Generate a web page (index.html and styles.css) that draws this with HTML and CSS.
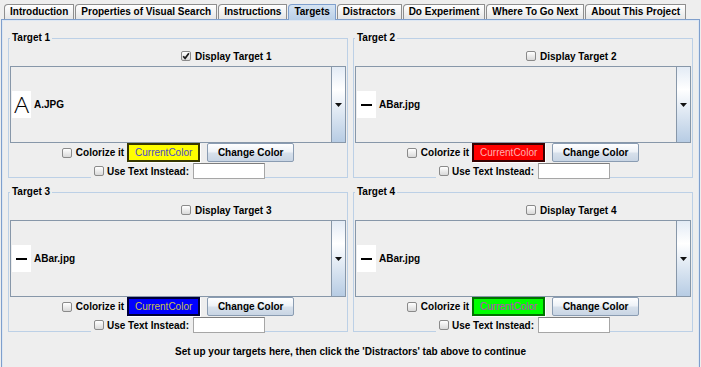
FILE: index.html
```html
<!DOCTYPE html>
<html>
<head>
<meta charset="utf-8">
<title>Targets</title>
<link rel="stylesheet" href="styles.css">
</head>
<body>
<div class="tabs">
  <div class="tab">Introduction</div>
  <div class="tab">Properties of Visual Search</div>
  <div class="tab">Instructions</div>
  <div class="tab active">Targets</div>
  <div class="tab">Distractors</div>
  <div class="tab">Do Experiment</div>
  <div class="tab">Where To Go Next</div>
  <div class="tab">About This Project</div>
</div>
<div class="panel">
  <div class="grid">
    <fieldset class="group">
      <legend>Target 1</legend>
      <div class="display"><span class="cb"><svg width="8" height="8" viewBox="0 0 8 8"><path d="M1.2 4.2 L3.1 6.3 L6.9 1.2" stroke="#1a1a1a" stroke-width="1.7" fill="none"/></svg></span><span>Display Target 1</span></div>
      <div class="combo">
        <div class="item"><span class="thumb"><span class="glyph-a">A</span></span><span class="name">A.JPG</span></div>
        <div class="arrow"><svg width="7" height="4" viewBox="0 0 7 4"><path d="M0 0H7L3.5 4Z" fill="#111"/></svg></div>
      </div>
      <div class="row1"><span class="cb"></span><span class="lbl">Colorize it</span><span class="swatch yellow">CurrentColor</span><span class="btn">Change Color</span></div>
      <div class="row2"><span class="cb"></span><span class="lbl">Use Text Instead:</span><span class="field"></span></div>
    </fieldset>
    <fieldset class="group">
      <legend>Target 2</legend>
      <div class="display"><span class="cb"></span><span>Display Target 2</span></div>
      <div class="combo">
        <div class="item"><span class="thumb"><span class="bar"></span></span><span class="name">ABar.jpg</span></div>
        <div class="arrow"><svg width="7" height="4" viewBox="0 0 7 4"><path d="M0 0H7L3.5 4Z" fill="#111"/></svg></div>
      </div>
      <div class="row1"><span class="cb"></span><span class="lbl">Colorize it</span><span class="swatch red">CurrentColor</span><span class="btn">Change Color</span></div>
      <div class="row2"><span class="cb"></span><span class="lbl">Use Text Instead:</span><span class="field"></span></div>
    </fieldset>
    <fieldset class="group">
      <legend>Target 3</legend>
      <div class="display"><span class="cb"></span><span>Display Target 3</span></div>
      <div class="combo">
        <div class="item"><span class="thumb"><span class="bar"></span></span><span class="name">ABar.jpg</span></div>
        <div class="arrow"><svg width="7" height="4" viewBox="0 0 7 4"><path d="M0 0H7L3.5 4Z" fill="#111"/></svg></div>
      </div>
      <div class="row1"><span class="cb"></span><span class="lbl">Colorize it</span><span class="swatch blue">CurrentColor</span><span class="btn">Change Color</span></div>
      <div class="row2"><span class="cb"></span><span class="lbl">Use Text Instead:</span><span class="field"></span></div>
    </fieldset>
    <fieldset class="group">
      <legend>Target 4</legend>
      <div class="display"><span class="cb"></span><span>Display Target 4</span></div>
      <div class="combo">
        <div class="item"><span class="thumb"><span class="bar"></span></span><span class="name">ABar.jpg</span></div>
        <div class="arrow"><svg width="7" height="4" viewBox="0 0 7 4"><path d="M0 0H7L3.5 4Z" fill="#111"/></svg></div>
      </div>
      <div class="row1"><span class="cb"></span><span class="lbl">Colorize it</span><span class="swatch green">CurrentColor</span><span class="btn">Change Color</span></div>
      <div class="row2"><span class="cb"></span><span class="lbl">Use Text Instead:</span><span class="field"></span></div>
    </fieldset>
  </div>
  <div class="hint">Set up your targets here, then click the 'Distractors' tab above to continue</div>
</div>
</body>
</html>
```
FILE: styles.css
```css
* { box-sizing: border-box; }
body {
  margin: 0;
  width: 701px;
  height: 367px;
  overflow: hidden;
  background: #eeeeee;
  font: bold 10px "Liberation Sans", Arial, sans-serif;
  color: #000;
}
.tabs {
  display: flex;
  padding: 4px 0 0 4px;
  height: 19px;
}
.tab {
  position: relative;
  height: 15px;
  line-height: 14px;
  padding: 0 5px;
  margin-right: 1px;
  border: 1px solid #8e8e8e;
  border-bottom: 0;
  border-radius: 4px 1px 0 0;
  background: linear-gradient(#ffffff, #e6e6e6);
  white-space: nowrap;
}
.tab.active {
  z-index: 1;
  height: 16px;
  border-color: #7f9fcc;
  background: linear-gradient(#d6e4f3, #b9cfe7);
}
.panel {
  margin: 0 1px;
  height: 360px;
  border: 1px solid #7f9fcc;
  box-shadow: inset 0 0 0 1px #dde7f3;
}
.grid {
  display: grid;
  grid-template-columns: 340px 340px;
  column-gap: 5px;
  row-gap: 8px;
  padding: 12px 0 0 6px;
}
.group {
  margin: 0;
  padding: 0;
  min-width: 0;
  border: 1px solid #bcd0e6;
}
.group legend {
  margin-left: 1px;
  padding: 0 2px;
  line-height: 12px;
}
.display {
  display: flex;
  align-items: center;
  gap: 4px;
  height: 14px;
  margin: 5px 0 0 172px;
}
.cb {
  display: inline-flex;
  align-items: center;
  justify-content: center;
  flex: none;
  width: 10px;
  height: 10px;
  border: 1px solid #8a8a8a;
  border-radius: 2px;
  background: linear-gradient(#ffffff, #d9d9d9);
}
.combo {
  display: flex;
  height: 77px;
  margin: 3px 1px 0;
  border: 1px solid #8797a9;
  background: #eeeeee;
}
.item {
  flex: 1;
  display: flex;
  align-items: center;
  gap: 3px;
  padding-left: 1px;
}
.thumb {
  display: flex;
  align-items: center;
  justify-content: center;
  width: 19px;
  height: 27px;
  background: #fff;
}
.glyph-a {
  font: 300 22px "Open Sans", "DejaVu Sans", sans-serif;
  line-height: 27px;
  margin-top: -1px;
  transform: scaleX(1.12);
}
.bar {
  width: 11px;
  height: 2px;
  background: #000;
}
.name {
  font-size: 10px;
}
.arrow {
  display: flex;
  align-items: center;
  justify-content: center;
  width: 14px;
  border-left: 1px solid #8797a9;
  background: linear-gradient(#e3ebf5, #ffffff 30%, #e4ecf5 55%, #b7cce4);
}
.row1 {
  display: flex;
  align-items: center;
  justify-content: center;
  height: 19px;
}
.row1 .lbl { margin: 0 3px 0 4px; }
.swatch {
  display: flex;
  align-items: center;
  justify-content: center;
  width: 73px;
  height: 19px;
  border: 2px solid rgba(0, 0, 0, 0.78);
  font-weight: normal;
  font-size: 10px;
  box-shadow: 1px 1px 0 #ffffff;
}
.yellow { background: #ffff00; color: #4a4acc; }
.red { background: #ff0000; color: #ffb0b0; }
.blue { background: #0000ff; color: #c9c24a; }
.green { background: #00ff00; color: #c23ec2; border-color: rgba(0, 80, 0, 0.8); }
.btn {
  display: flex;
  align-items: center;
  justify-content: center;
  width: 87px;
  height: 19px;
  margin-left: 7px;
  border: 1px solid #8a9cb2;
  border-radius: 2px;
  background: linear-gradient(#ffffff, #eef2f7 45%, #d7e0eb 55%, #c8d5e4);
}
.row2 {
  display: flex;
  align-items: center;
  width: fit-content;
  height: 16px;
  margin: 1px auto -2px;
  padding-left: 3px;
  background: #eeeeee;
}
.row2 .lbl { margin-left: 3px; }
.field {
  width: 72px;
  height: 16px;
  margin-left: 4px;
  background: #fff;
  border: 1px solid #a6a6a6;
  border-top-color: #7d7d7d;
}
.hint {
  margin-top: 14px;
  text-align: center;
  line-height: 12px;
}
```
